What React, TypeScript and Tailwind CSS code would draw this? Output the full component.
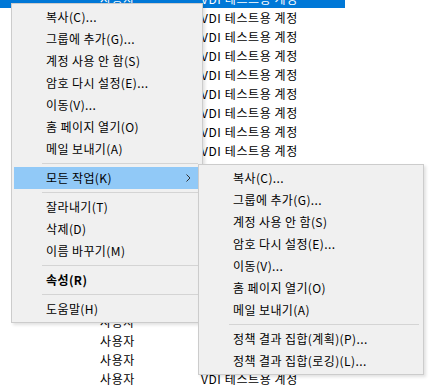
import React from 'react';

type Item = { label: string; bold?: boolean; active?: boolean; sub?: boolean } | 'sep';

const mainItems: Item[] = [
  { label: '복사(C)...' },
  { label: '그룹에 추가(G)...' },
  { label: '계정 사용 안 함(S)' },
  { label: '암호 다시 설정(E)...' },
  { label: '이동(V)...' },
  { label: '홈 페이지 열기(O)' },
  { label: '메일 보내기(A)' },
  'sep',
  { label: '모든 작업(K)', active: true, sub: true },
  'sep',
  { label: '잘라내기(T)' },
  { label: '삭제(D)' },
  { label: '이름 바꾸기(M)' },
  'sep',
  { label: '속성(R)', bold: true },
  'sep',
  { label: '도움말(H)' },
];

const subItems: Item[] = [
  { label: '복사(C)...' },
  { label: '그룹에 추가(G)...' },
  { label: '계정 사용 안 함(S)' },
  { label: '암호 다시 설정(E)...' },
  { label: '이동(V)...' },
  { label: '홈 페이지 열기(O)' },
  { label: '메일 보내기(A)' },
  'sep',
  { label: '정책 결과 집합(계획)(P)...' },
  { label: '정책 결과 집합(로깅)(L)...' },
];

const font = { fontFamily: '"Noto Sans CJK KR", "Noto Sans", sans-serif' };

const MenuList: React.FC<{ items: Item[] }> = ({ items }) => (
  <>
    {items.map((it, i) =>
      it === 'sep' ? (
        <div key={i} className="h-[7px] flex items-center ml-[28px]">
          <div className="h-px w-full bg-[#d4d4d4]" />
        </div>
      ) : (
        <div
          key={i}
          className={`h-[22px] flex items-center pl-[32px] pr-[6px] text-[12px] leading-none tracking-[0.4px] text-black ${
            it.active ? 'bg-[#91c9f7]' : ''
          } ${it.bold ? 'font-bold' : ''}`}
        >
          <span className="flex-1 whitespace-nowrap">{it.label}</span>
          {it.sub && (
            <svg width="5" height="8" viewBox="0 0 5 8" className="mr-[1px]">
              <path d="M0.5 0.5 L4 4 L0.5 7.5" fill="none" stroke="#333" strokeWidth="1" />
            </svg>
          )}
        </div>
      )
    )}
  </>
);

const rows = Array.from({ length: 21 }, (_, i) => i);

export default function App() {
  return (
    <div className="relative w-[436px] h-[386px] overflow-hidden bg-white" style={font}>
      {/* list behind the menus */}
      <div className="-mt-[11px] flex flex-col">
        {rows.map(i => (
          <div
            key={i}
            className={`h-[19px] w-[345px] flex items-center pl-[100px] text-[12px] tracking-[0.6px] ${
              i === 0 ? 'bg-[#0078d7] text-white' : 'text-black'
            }`}
          >
            <span className="w-[101px] whitespace-nowrap">사용자</span>
            <span className="whitespace-nowrap">VDI 테스트용 계정</span>
          </div>
        ))}
      </div>

      {/* context menu */}
      <div className="absolute left-[11px] top-[3px] w-[192px] bg-[#f0f0f0] border border-[#cccccc] py-[2px] pl-[2px] pr-[4px] shadow-[2px_2px_3px_rgba(0,0,0,0.12)]">
        <MenuList items={mainItems} />
      </div>

      {/* submenu */}
      <div className="absolute left-[198px] top-[164px] w-[226px] bg-[#f0f0f0] border border-[#cccccc] py-[2px] pl-[2px] pr-[4px] shadow-[2px_2px_3px_rgba(0,0,0,0.12)]">
        <MenuList items={subItems} />
      </div>
    </div>
  );
}
